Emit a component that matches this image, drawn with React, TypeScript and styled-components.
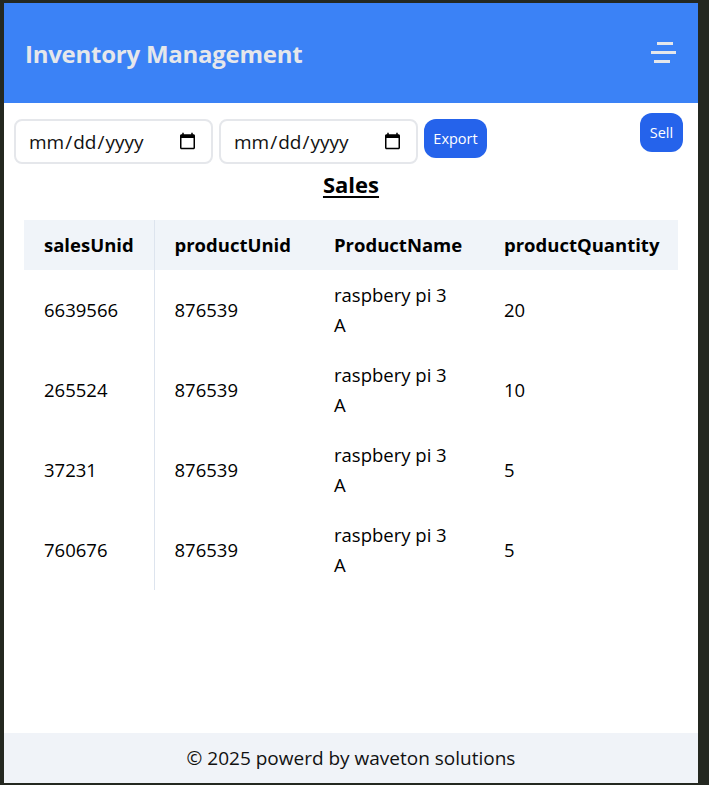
import React from "react";
import styled, { createGlobalStyle } from "styled-components";

const Global = createGlobalStyle`
  html, body { margin: 0; padding: 0; }
  body {
    background: #242820;
    padding: 3px 11px 2px 4px;
    font-family: "Open Sans", "Noto Sans", sans-serif;
  }
  * { box-sizing: border-box; }
`;

const Shell = styled.div`
  height: 780px;
  background: #ffffff;
  display: flex;
  flex-direction: column;
`;

const Header = styled.header`
  height: 100px;
  background: #3b82f6;
  display: flex;
  align-items: center;
  justify-content: space-between;
  padding: 0 21px 0 21px;
`;

const Title = styled.h1`
  margin: 0;
  font-size: 24px;
  font-weight: 700;
  color: #e5e7eb;
  letter-spacing: -0.25px;
`;

const MenuButton = styled.button`
  background: none;
  border: 0;
  padding: 0;
  width: 26px;
  height: 22px;
  display: flex;
  cursor: pointer;
`;

const Main = styled.main`
  flex: 1;
  display: flex;
  flex-direction: column;
`;

const Toolbar = styled.div`
  display: flex;
  justify-content: space-between;
  align-items: flex-start;
  padding: 10px 15px 0 10px;
`;

const Filters = styled.div`
  display: flex;
  gap: 6px;
  margin-top: 6px;
`;

const DateInput = styled.input`
  width: 199px;
  height: 45px;
  border: 2px solid #e5e7eb;
  border-radius: 8px;
  padding: 0 12px;
  font-family: "Open Sans", sans-serif;
  font-size: 19px;
  color: #111;
  background: #fff;
`;

const Button = styled.button<{ $w: number }>`
  width: ${(p) => p.$w}px;
  height: 39px;
  border: 0;
  border-radius: 12px;
  background: #2563eb;
  color: #fff;
  font-family: "Open Sans", sans-serif;
  font-size: 14.5px;
  padding: 0;
  cursor: pointer;
`;

const Heading = styled.h2`
  margin: 7px 0 23px;
  text-align: center;
  font-size: 22px;
  font-weight: 700;
  text-decoration: underline;
  text-underline-offset: 3px;
  line-height: 26px;
  color: #000;
`;

const Table = styled.table`
  margin: 0 20px;
  width: 654px;
  border-collapse: collapse;
  table-layout: fixed;
  font-size: 18.5px;
  line-height: 30px;
  color: #000;
`;

const HeadRow = styled.tr`
  background: #f0f4f9;
`;

const Th = styled.th<{ $divider?: boolean }>`
  text-align: left;
  font-weight: 700;
  padding: 10px 20px;
  white-space: nowrap;
  border-right: ${(p) => (p.$divider ? "1px solid #dde4ee" : "0")};
`;

const Td = styled.td<{ $divider?: boolean; $narrow?: boolean }>`
  padding: 10px ${(p) => (p.$narrow ? "32px" : "20px")} 10px 20px;
  vertical-align: middle;
  border-right: ${(p) => (p.$divider ? "1px solid #dde4ee" : "0")};
`;

const Footer = styled.footer`
  height: 50px;
  background: #f0f3f8;
  display: flex;
  align-items: center;
  justify-content: center;
  font-size: 19px;
  color: #111;
`;

const rows = [
  { s: "6639566", p: "876539", n: "raspbery pi 3 A", q: "20" },
  { s: "265524", p: "876539", n: "raspbery pi 3 A", q: "10" },
  { s: "37231", p: "876539", n: "raspbery pi 3 A", q: "5" },
  { s: "760676", p: "876539", n: "raspbery pi 3 A", q: "5" },
];

export default function App() {
  return (
    <>
      <Global />
      <Shell>
        <Header>
          <Title>Inventory Management</Title>
          <MenuButton aria-label="menu">
            <svg width="26" height="22" viewBox="0 0 26 22">
              <rect x="6" y="0" width="16" height="3" fill="#e5e7eb" />
              <rect x="0" y="9" width="25" height="3" fill="#e5e7eb" />
              <rect x="3" y="18" width="16" height="3" fill="#e5e7eb" />
            </svg>
          </MenuButton>
        </Header>
        <Main>
          <Toolbar>
            <Filters>
              <DateInput type="date" />
              <DateInput type="date" />
              <Button $w={63}>Export</Button>
            </Filters>
            <Button $w={43}>Sell</Button>
          </Toolbar>
          <Heading>Sales</Heading>
          <Table>
            <colgroup>
              <col style={{ width: 130 }} />
              <col style={{ width: 160 }} />
              <col style={{ width: 170 }} />
              <col style={{ width: 194 }} />
            </colgroup>
            <thead>
              <HeadRow>
                <Th $divider>salesUnid</Th>
                <Th>productUnid</Th>
                <Th>ProductName</Th>
                <Th>productQuantity</Th>
              </HeadRow>
            </thead>
            <tbody>
              {rows.map((r) => (
                <tr key={r.s}>
                  <Td $divider>{r.s}</Td>
                  <Td>{r.p}</Td>
                  <Td $narrow>{r.n}</Td>
                  <Td>{r.q}</Td>
                </tr>
              ))}
            </tbody>
          </Table>
        </Main>
        <Footer>© 2025 powerd by waveton solutions</Footer>
      </Shell>
    </>
  );
}
